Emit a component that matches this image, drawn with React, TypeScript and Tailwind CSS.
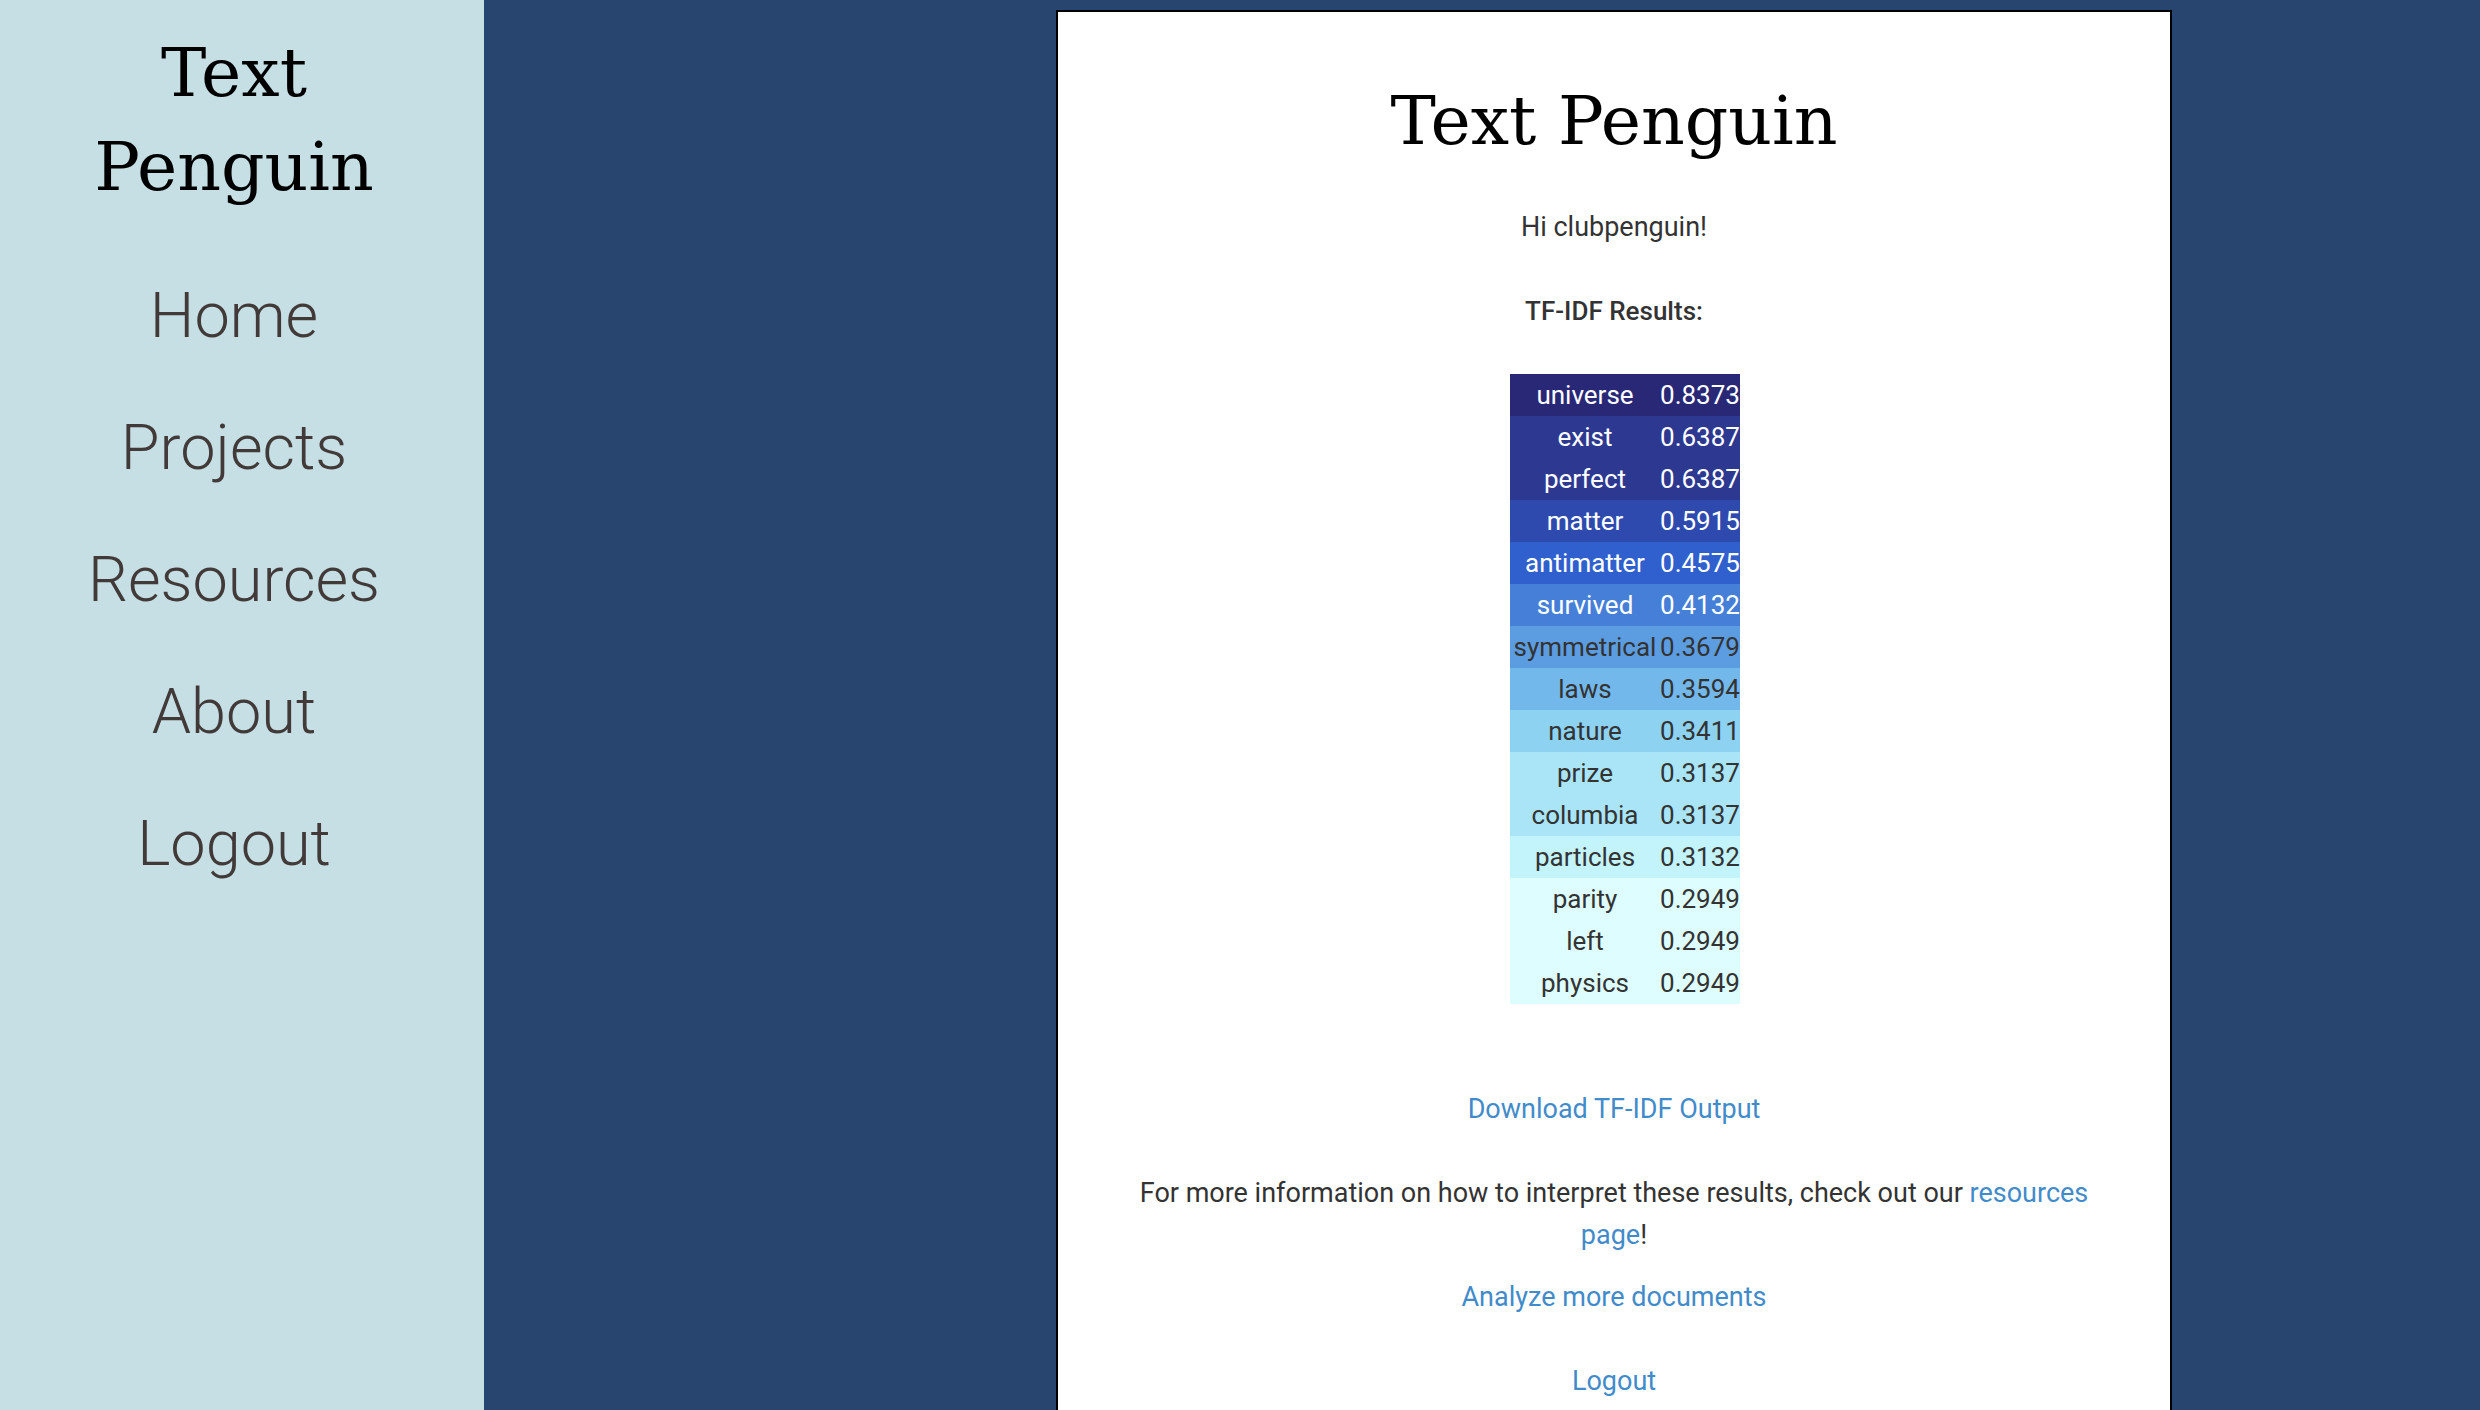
const nav = ['Home', 'Projects', 'Resources', 'About', 'Logout'];

const rows = [
  { term: 'universe', score: '0.8373', tone: 'bg-[#282877] text-white' },
  { term: 'exist', score: '0.6387', tone: 'bg-[#2d3891] text-white' },
  { term: 'perfect', score: '0.6387', tone: 'bg-[#2d3891] text-white' },
  { term: 'matter', score: '0.5915', tone: 'bg-[#2e4aaf] text-white' },
  { term: 'antimatter', score: '0.4575', tone: 'bg-[#3060ce] text-white' },
  { term: 'survived', score: '0.4132', tone: 'bg-[#467fd8] text-white' },
  { term: 'symmetrical', score: '0.3679', tone: 'bg-[#5c9de1]' },
  { term: 'laws', score: '0.3594', tone: 'bg-[#73b8ea]' },
  { term: 'nature', score: '0.3411', tone: 'bg-[#8dd2f1]' },
  { term: 'prize', score: '0.3137', tone: 'bg-[#a9e5f7]' },
  { term: 'columbia', score: '0.3137', tone: 'bg-[#a9e5f7]' },
  { term: 'particles', score: '0.3132', tone: 'bg-[#c3f4fb]' },
  { term: 'parity', score: '0.2949', tone: 'bg-[#defdfe]' },
  { term: 'left', score: '0.2949', tone: 'bg-[#defdfe]' },
  { term: 'physics', score: '0.2949', tone: 'bg-[#defdfe]' },
];

export default function App() {
  return (
    <div className="flex h-screen overflow-hidden bg-[#284570] font-['Roboto',sans-serif] text-[27px] leading-[42px] text-[#333333]">
      <aside className="w-[484px] shrink-0 bg-[#c5dfe4] pt-[26px] pr-4 text-center">
        <h1 className="px-16 font-['DejaVu_Serif',serif] text-[68px] leading-[94px] text-black">
          Text Penguin
        </h1>
        <nav className="mt-9 flex flex-col items-center text-[63px] leading-[132px] font-light text-[#413a39]">
          {nav.map((item) => (
            <a key={item} href="#">
              {item}
            </a>
          ))}
        </nav>
      </aside>
      <main className="flex-1 pt-[10px] pl-66">
        <section className="mx-auto w-full max-w-[1116px] border-2 border-black bg-white px-16 pt-[62px] pb-20 text-center">
          <h1 className="font-['DejaVu_Serif',serif] text-[68px] leading-[94px] text-black">
            Text Penguin
          </h1>
          <p className="mt-[38px]">Hi clubpenguin!</p>
          <h2 className="mt-[42px] text-[26px] leading-[42px] font-medium">TF-IDF Results:</h2>
          <div className="mt-[42px] flex justify-center pl-[22px]">
            <table className="w-[230px] table-fixed border-collapse text-[26px] leading-[42px]">
              <colgroup>
                <col className="w-[150px]" />
                <col className="w-20" />
              </colgroup>
              <tbody>
                {rows.map((r) => (
                  <tr key={r.term} className={r.tone}>
                    <td className="p-0">{r.term}</td>
                    <td className="p-0">{r.score}</td>
                  </tr>
                ))}
              </tbody>
            </table>
          </div>
          <p className="mt-[84px]">
            <a href="#" className="text-[#428bca]">Download TF-IDF Output</a>
          </p>
          <p className="mt-[42px]">
            For more information on how to interpret these results, check out our{' '}
            <a href="#" className="text-[#428bca]">resources page</a>!
          </p>
          <p className="mt-5">
            <a href="#" className="text-[#428bca]">Analyze more documents</a>
          </p>
          <p className="mt-[42px]">
            <a href="#" className="text-[#428bca]">Logout</a>
          </p>
        </section>
      </main>
    </div>
  );
}
